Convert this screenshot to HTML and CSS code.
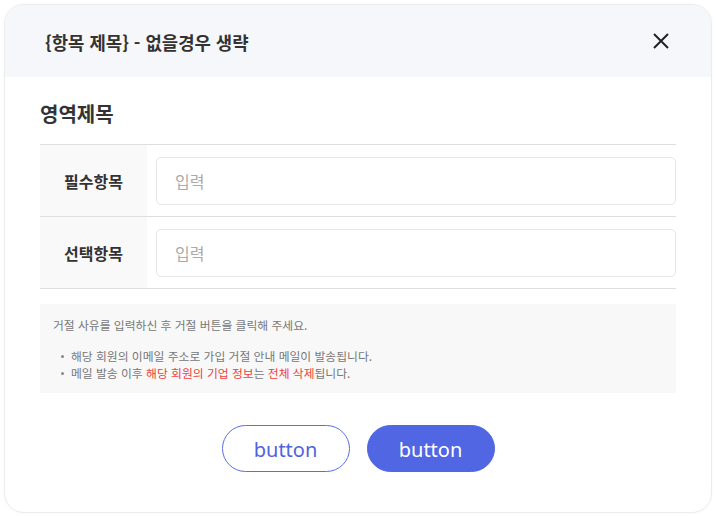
FILE: index.html
```html
<!DOCTYPE html>
<html lang="ko">
<head>
<meta charset="utf-8">
<link rel="stylesheet" href="styles.css">
</head>
<body>
<div class="modal">
  <div class="modal-header">
    <h1 class="modal-title">{항목 제목} - 없을경우 생략</h1>
    <button class="close-btn" aria-label="닫기">
      <svg width="16" height="16" viewBox="0 0 16 16"><path d="M1 1 L15 15 M15 1 L1 15" stroke="#222" stroke-width="2" fill="none"/></svg>
    </button>
  </div>
  <div class="modal-body">
    <h2 class="section-title">영역제목</h2>
    <div class="form-table">
      <div class="form-row">
        <div class="form-label">필수항목</div>
        <div class="form-field"><input class="text-input" type="text" placeholder="입력"></div>
      </div>
      <div class="form-row">
        <div class="form-label">선택항목</div>
        <div class="form-field"><input class="text-input" type="text" placeholder="입력"></div>
      </div>
    </div>
    <div class="info-box">
      <p class="info-lead">거절 사유를 입력하신 후 거절 버튼을 클릭해 주세요.</p>
      <ul class="info-list">
        <li>해당 회원의 이메일 주소로 가입 거절 안내 메일이 발송됩니다.</li>
        <li>메일 발송 이후 <span class="warn">해당 회원의 기업 정보</span>는 <span class="warn">전체 삭제</span>됩니다.</li>
      </ul>
    </div>
    <div class="actions">
      <button class="btn btn-outline">button</button>
      <button class="btn btn-primary">button</button>
    </div>
  </div>
</div>
</body>
</html>
```

FILE: styles.css
```css
* { box-sizing: border-box; }
html, body { margin: 0; padding: 0; background: #fff; }
body {
  padding: 4px;
  font-family: "Noto Sans CJK KR", "Noto Sans", sans-serif;
  color: #333;
}
.modal {
  width: 708px;
  height: 509px;
  border: 1px solid #ececec;
  border-radius: 20px;
  overflow: hidden;
  background: #fff;
  box-shadow: 0 0 3px rgba(0,0,0,0.04);
}
.modal-header {
  height: 72px;
  background: #f6f7fb;
  display: flex;
  align-items: center;
  justify-content: space-between;
  padding: 0 40px 0 40px;
}
.modal-title {
  margin: 0;
  font-size: 17.8px;
  font-weight: 700;
  color: #333;
  padding-top: 1px;
}
.close-btn {
  border: 0;
  background: none;
  padding: 0;
  width: 16px;
  height: 16px;
  display: flex;
  margin-right: 2px;
}
.modal-body {
  padding: 20px 35px 0 35px;
}
.section-title {
  margin: 0 0 12px 0;
  font-size: 20px;
  font-weight: 700;
  color: #333;
  line-height: 34px;
  height: 35px;
}
.form-table {
  border-top: 1px solid #dedede;
}
.form-row {
  display: flex;
  height: 72px;
  border-bottom: 1px solid #dedede;
}
.form-label {
  width: 107px;
  background: #f9f9f9;
  display: flex;
  align-items: center;
  justify-content: center;
  font-size: 16px;
  font-weight: 700;
  color: #333;
}
.form-field {
  flex: 1;
  display: flex;
  align-items: center;
  padding-left: 9px;
}
.text-input {
  width: 100%;
  height: 48px;
  border: 1.5px solid #e6e6e6;
  border-radius: 5px;
  padding: 0 18px;
  font-family: inherit;
  font-size: 16px;
  color: #333;
  outline: none;
}
.text-input::placeholder { color: #aaa; }
.info-box {
  margin-top: 15px;
  background: #f8f8f8;
  padding: 12px 13px 12px 13px;
  height: 89px;
  font-size: 11.8px;
  color: #777;
  line-height: 17px;
}
.info-lead { margin: 0 0 14px 0; }
.info-list {
  margin: 0;
  padding: 0 0 0 8px;
  list-style: none;
}
.info-list li { position: relative; padding-left: 10px; }
.info-list li::before {
  content: "";
  position: absolute;
  left: 0;
  top: 8px;
  width: 3px;
  height: 3px;
  border-radius: 50%;
  background: #888;
}
.warn { color: #f03c3c; }
.actions {
  display: flex;
  justify-content: center;
  gap: 17px;
  margin-top: 32px;
}
.btn {
  width: 128px;
  height: 47px;
  border-radius: 24px;
  font-family: "Noto Sans", sans-serif;
  font-size: 20px;
  cursor: pointer;
  padding: 2px 0 0 0;
}
.btn-outline {
  background: #fff;
  border: 1px solid #5a6ee6;
  color: #4f63e0;
}
.btn-primary {
  background: #5066e3;
  border: 1px solid #5066e3;
  color: #fff;
}
```
